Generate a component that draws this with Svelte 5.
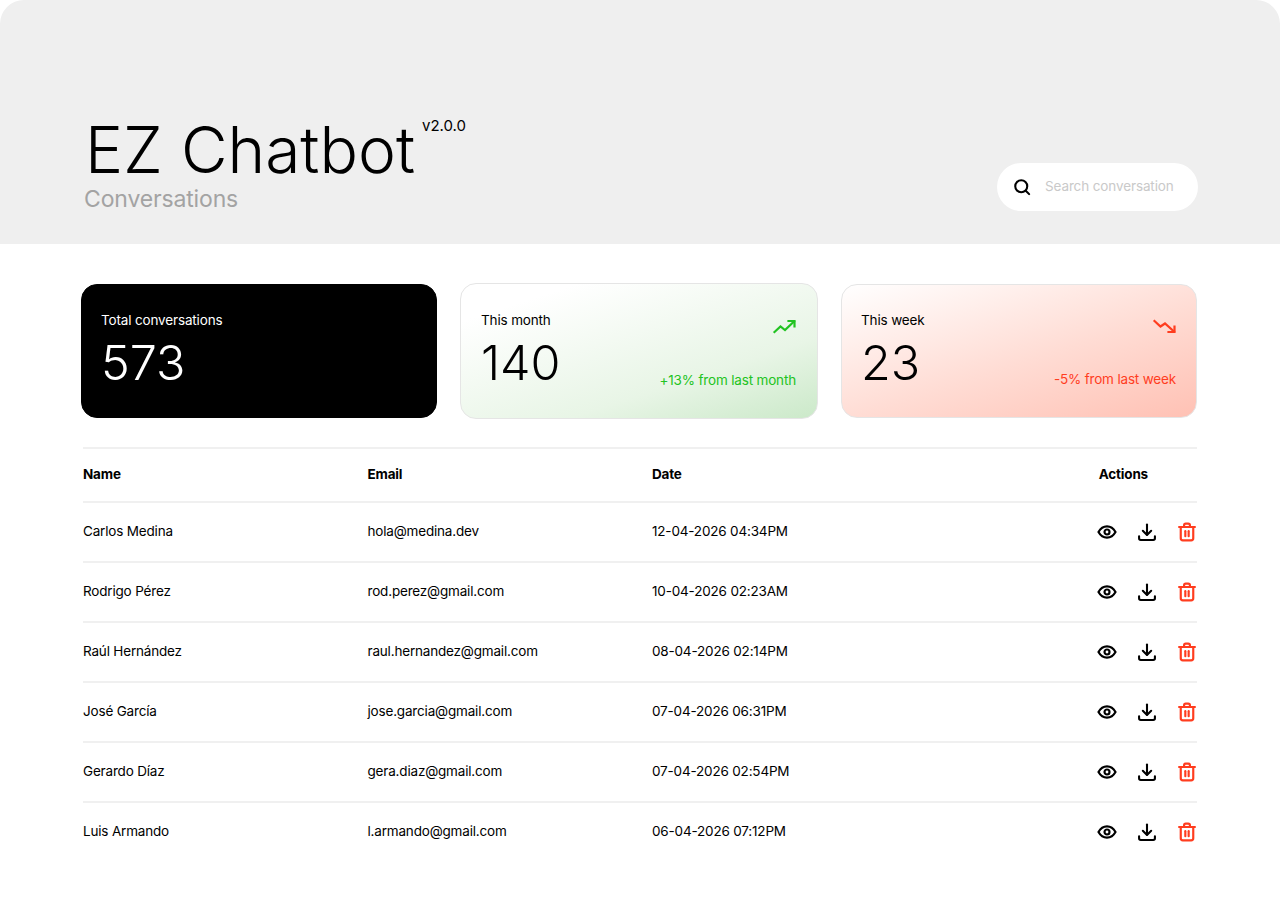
<script>
	const rows = [
		{ name: 'Carlos Medina', email: 'hola@medina.dev', date: '12-04-2026 04:34PM' },
		{ name: 'Rodrigo Pérez', email: 'rod.perez@gmail.com', date: '10-04-2026 02:23AM' },
		{ name: 'Raúl Hernández', email: 'raul.hernandez@gmail.com', date: '08-04-2026 02:14PM' },
		{ name: 'José García', email: 'jose.garcia@gmail.com', date: '07-04-2026 06:31PM' },
		{ name: 'Gerardo Díaz', email: 'gera.diaz@gmail.com', date: '07-04-2026 02:54PM' },
		{ name: 'Luis Armando', email: 'l.armando@gmail.com', date: '06-04-2026 07:12PM' }
	];
</script>

<div class="page">
	<header class="header">
		<div class="titles">
			<div class="title-row">
				<h1>EZ Chatbot</h1>
				<span class="version">v2.0.0</span>
			</div>
			<p class="subtitle">Conversations</p>
		</div>
		<label class="search">
			<svg width="18" height="18" viewBox="0 0 24 24" fill="none" stroke="currentColor" stroke-width="2.800" stroke-linecap="round">
				<circle cx="11" cy="11" r="8" />
				<path d="M17 17l4.500 4.500" />
			</svg>
			<input type="text" placeholder="Search conversation" />
		</label>
	</header>

	<section class="stats">
		<div class="card dark">
			<span class="label">Total conversations</span>
			<span class="value">573</span>
		</div>
		<div class="card up">
			<div class="col">
				<span class="label">This month</span>
				<span class="value">140</span>
			</div>
			<div class="trend">
				<svg width="24" height="24" viewBox="0 0 24 24" fill="none" stroke="currentColor" stroke-width="2.200" stroke-linecap="square">
					<path d="M2.500 18l6-5.500 4.500 3.500 9-8.500" />
					<path d="M16.500 7h6v5.500" />
				</svg>
				<span class="note">+13% from last month</span>
			</div>
		</div>
		<div class="card down">
			<div class="col">
				<span class="label">This week</span>
				<span class="value">23</span>
			</div>
			<div class="trend">
				<svg width="24" height="24" viewBox="0 0 24 24" fill="none" stroke="currentColor" stroke-width="2.200" stroke-linecap="square">
					<path d="M2.500 7l6 5.500 4.500-3 9 8" />
					<path d="M22.500 12.500V18h-6" />
				</svg>
				<span class="note">-5% from last week</span>
			</div>
		</div>
	</section>

	<section class="table">
		<div class="row head">
			<span>Name</span>
			<span>Email</span>
			<span>Date</span>
			<span class="actions-title">Actions</span>
		</div>
		{#each rows as row (row.email)}
			<div class="row">
				<span>{row.name}</span>
				<span>{row.email}</span>
				<span>{row.date}</span>
				<div class="actions">
					<button type="button" aria-label="View">
						<svg width="20" height="20" viewBox="0 0 24 24" fill="none" stroke="currentColor" stroke-width="2.600">
							<path d="M1.800 12c2.500-4.500 5.900-6.800 10.200-6.800s7.700 2.300 10.200 6.800c-2.500 4.500-5.900 6.800-10.200 6.800S4.300 16.500 1.800 12z" />
							<circle cx="12" cy="12" r="3" />
						</svg>
					</button>
					<button type="button" aria-label="Download">
						<svg width="20" height="20" viewBox="0 0 24 24" fill="none" stroke="currentColor" stroke-width="2.500" stroke-linecap="round" stroke-linejoin="round">
							<path d="M12 3v12" />
							<path d="M7 10.500l5 5 5-5" />
							<path d="M2.500 17v2.500a2 2 0 0 0 2 2h15a2 2 0 0 0 2-2V17" />
						</svg>
					</button>
					<button type="button" class="danger" aria-label="Delete">
						<svg width="20" height="20" viewBox="0 0 24 24" fill="none" stroke="currentColor" stroke-width="2.600" stroke-linecap="round" stroke-linejoin="round">
							<path d="M2.500 6h19" />
							<path d="M8.500 6V4a2 2 0 0 1 2-2h3a2 2 0 0 1 2 2v2" />
							<path d="M4.500 6v13.500a2.500 2.500 0 0 0 2.500 2.500h10a2.500 2.500 0 0 0 2.500-2.500V6" />
							<path d="M10 11v6" />
							<path d="M14 11v6" />
						</svg>
					</button>
				</div>
			</div>
		{/each}
	</section>
</div>

<style>
	:global(body) {
		margin: 0;
		background: #fff;
	}

	.page {
		height: 921px;
		color: #000;
		font-family: 'Inter', 'Noto Sans', sans-serif;
		overflow: hidden;
	}

	.header {
		box-sizing: border-box;
		height: 244px;
		padding: 0 82px 31px 84px;
		background: #efefef;
		border-radius: 24px 24px 0 0;
		display: flex;
		justify-content: space-between;
		align-items: flex-end;
	}

	.title-row {
		display: flex;
		align-items: flex-start;
		gap: 7px;
	}

	h1 {
		margin: 0 0 0 1px;
		font-size: 64px;
		font-weight: 300;
		line-height: 64px;
	}

	.version {
		font-size: 15px;
		line-height: 18px;
		margin-top: -1px;
	}

	.subtitle {
		margin: 3px 0 0;
		font-size: 23px;
		line-height: 28px;
		letter-spacing: -0.15px;
		color: #a3a3a3;
	}

	.search {
		box-sizing: border-box;
		width: 201px;
		height: 48px;
		margin-bottom: 2px;
		padding: 0 16px;
		background: #fff;
		border-radius: 24px;
		display: flex;
		align-items: center;
		gap: 14px;
	}

	.search input {
		min-width: 0;
		flex: 1;
		padding: 0 0 2px;
		border: 0;
		outline: 0;
		background: transparent;
		font: inherit;
		font-size: 13.500px;
		letter-spacing: -0.12px;
	}

	.search input::placeholder {
		color: #c9c9c9;
		opacity: 1;
	}

	.stats {
		box-sizing: border-box;
		margin-top: 40px;
		padding: 0 83px 0 81px;
		display: grid;
		grid-template-columns: repeat(3, 356px);
		gap: 24px;
	}

	.card {
		box-sizing: border-box;
		height: 134px;
		padding: 19px 20px 20px 19px;
		border: 1px solid #e5e5e5;
		border-radius: 16px;
		display: flex;
		justify-content: space-between;
	}

	.col,
	.card.dark {
		flex-direction: column;
	}

	.col {
		display: flex;
	}

	.card.dark {
		justify-content: flex-start;
		background: #000;
		border-color: #000;
		color: #fff;
	}

	.card.up {
		height: 136px;
		margin: -1px;
		padding: 20px 21px 20px 20px;
		background: linear-gradient(162deg, #fff 15%, #e8f5e6 68%, #cbe9c9 100%);
		color: #000;
	}

	.card.down {
		background: linear-gradient(162deg, #fff 0%, #ffdcd4 55%, #ffc1b4 100%);
	}

	.label {
		font-size: 13.500px;
		line-height: 32px;
		letter-spacing: -0.15px;
		margin-bottom: 1px;
	}

	.value {
		font-size: 48.500px;
		line-height: 52px;
		font-weight: 300;
	}

	.trend {
		display: flex;
		flex-direction: column;
		justify-content: space-between;
		align-items: flex-end;
		padding: 10px 0 8px;
	}

	.up .trend {
		color: #22c322;
	}

	.down .trend {
		color: #ff3d1f;
	}

	.note {
		font-size: 13.500px;
		line-height: 20px;
		letter-spacing: -0.17px;
	}

	.table {
		margin: 29px 83px 0;
		border-top: 2px solid #f0f0f0;
	}

	.row {
		box-sizing: border-box;
		height: 60px;
		display: grid;
		grid-template-columns: 284.500px 284.500px 1fr 100px;
		align-items: center;
		border-bottom: 2px solid #f0f0f0;
		font-size: 13.500px;
		letter-spacing: -0.18px;
	}

	.row > span {
		padding-bottom: 3px;
	}

	.row:last-child {
		border-bottom-color: transparent;
	}

	.row.head {
		height: 54px;
		font-size: 13.500px;
		font-weight: 700;
	}

	.actions-title {
		text-align: right;
		padding-right: 49px;
	}

	.actions {
		display: flex;
		justify-content: flex-end;
		gap: 20px;
	}

	.actions button {
		width: 20px;
		height: 20px;
		padding: 0;
		border: 0;
		background: none;
		color: #000;
		display: flex;
	}

	.actions button.danger {
		color: #ff3d1f;
	}
</style>
